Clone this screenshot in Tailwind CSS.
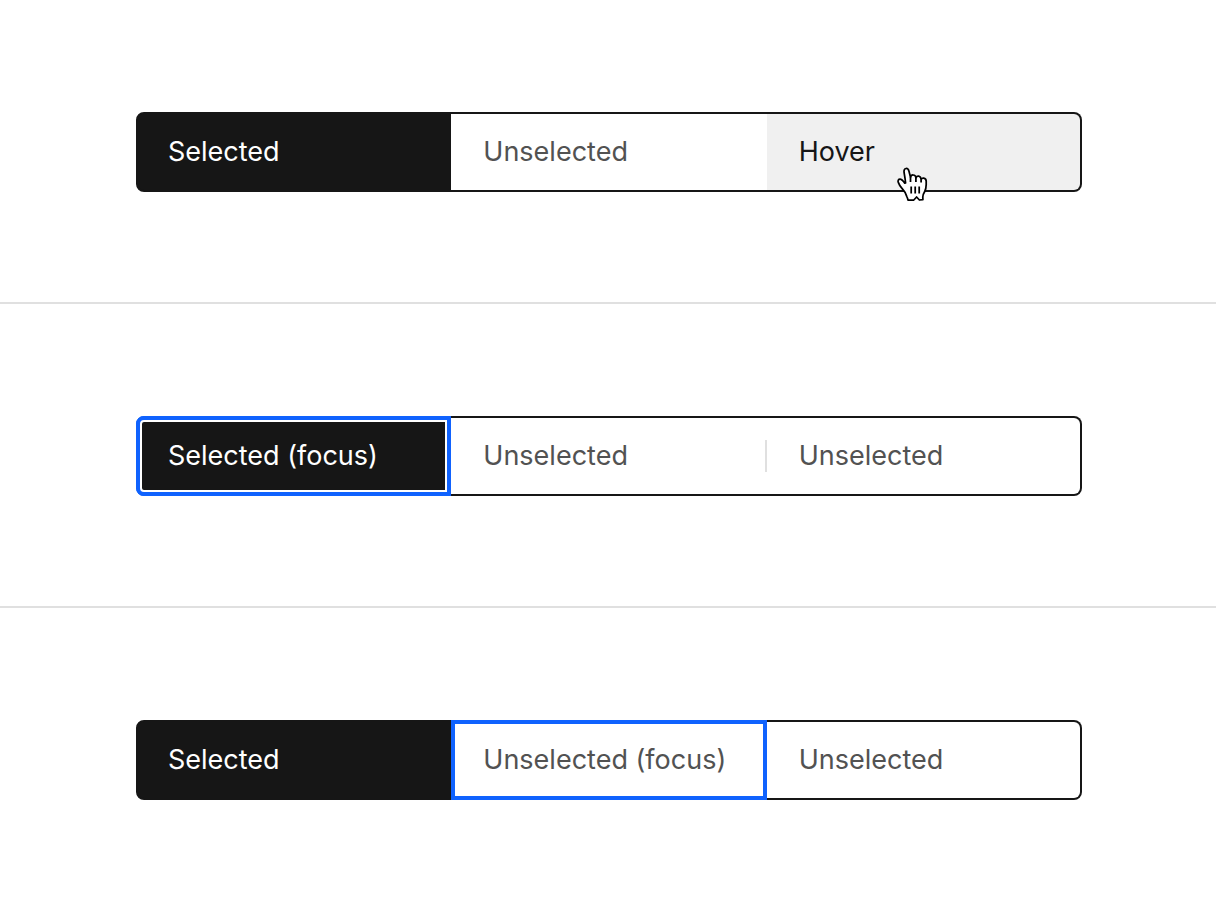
<!DOCTYPE html>
<html lang="en">
<head>
<meta charset="utf-8">
<meta name="viewport" content="width=device-width, initial-scale=1">
<title>Content switcher states</title>
<script src="https://cdn.jsdelivr.net/npm/@tailwindcss/browser@4"></script>
</head>
<body class="bg-white font-['Inter',sans-serif] text-[27px] leading-9 font-normal">
<main>
  <section class="border-b-2 border-[#e0e0e0] pt-28 pr-[134px] pb-[110px] pl-[136px]">
    <div role="tablist" aria-label="Hover state" class="grid grid-cols-3">
      <button role="tab" aria-selected="true" class="h-20 rounded-l-lg border-2 border-[#161616] bg-[#161616] px-[30px] text-left text-white">Selected</button>
      <button role="tab" aria-selected="false" class="h-20 border-y-2 border-[#161616] bg-white px-8 text-left text-[#525252]">Unselected</button>
      <button role="tab" aria-selected="false" class="relative h-20 rounded-r-lg border-y-2 border-r-2 border-[#161616] bg-[#f0f0f0] px-8 text-left text-[#161616]">Hover
        <svg class="absolute top-[51px] left-[129px] h-[38px] w-8" viewBox="0 0 32 38" fill="none" aria-hidden="true">
          <path d="M10.8 31.5C10.2 28.5 8.4 26 6.2 23.6C4.2 21.6 3 19.4 2.3 17.4C1.6 15.6 2.4 14.2 4 14.2C5.8 14.2 7.2 16 8.8 18.2L9.6 18C9.3 14.5 8.7 11 8.1 7.6C7.7 5.4 8.4 3.7 10 3.5C11.7 3.3 12.6 4.7 13 6.4L14.5 12.2C14.8 10.8 15.7 9.9 17.2 10C18.8 10.1 19.8 11.2 19.9 12.8C20.5 11.5 21.5 10.9 22.8 11.2C24.2 11.5 24.9 12.6 25.1 14.2C25.7 13.3 26.6 12.9 27.7 13.1C29.3 13.4 30.2 14.5 30.2 16.3V19.5C30.2 22.6 29.7 24.6 28.6 26.8C27.4 28.7 26.8 30 26.8 32L26.9 34.6L23.4 35L20.6 32L17.8 35H12L11.6 33.5Z" fill="white" stroke="black" stroke-width="1.75" stroke-linejoin="round"/>
          <path d="M14.5 12.2V17M19.9 12.8V17M25.1 14.2V17.5M15.2 21.5V28.5M19.2 21.5V28.5M23.2 21.5V28.5" stroke="black" stroke-width="1.75"/>
        </svg>
      </button>
    </div>
  </section>

  <section class="border-b-2 border-[#e0e0e0] pt-28 pr-[134px] pb-[110px] pl-[136px]">
    <div role="tablist" aria-label="Selected focus state" class="grid grid-cols-3">
      <button role="tab" aria-selected="true" class="h-20 rounded-l-lg border-2 border-[#0f62fe] bg-[#161616] px-[30px] text-left text-white shadow-[inset_0_0_0_4px_white] outline-4 -outline-offset-4 outline-[#0f62fe]">Selected (focus)</button>
      <button role="tab" aria-selected="false" class="flex h-20 items-center justify-between border-y-2 border-[#161616] bg-white pl-8 text-left text-[#525252]">Unselected<span class="h-8 w-0.5 bg-[#e0e0e0]"></span></button>
      <button role="tab" aria-selected="false" class="h-20 rounded-r-lg border-y-2 border-r-2 border-[#161616] bg-white px-8 text-left text-[#525252]">Unselected</button>
    </div>
  </section>

  <section class="pt-28 pr-[134px] pb-[110px] pl-[136px]">
    <div role="tablist" aria-label="Unselected focus state" class="grid grid-cols-3">
      <button role="tab" aria-selected="true" class="h-20 rounded-l-lg border-2 border-[#161616] bg-[#161616] px-[30px] text-left text-white">Selected</button>
      <button role="tab" aria-selected="false" class="h-20 border-y-2 border-[#161616] bg-white px-8 text-left text-[#525252] outline-4 -outline-offset-4 outline-[#0f62fe]">Unselected (focus)</button>
      <button role="tab" aria-selected="false" class="h-20 rounded-r-lg border-y-2 border-r-2 border-[#161616] bg-white px-8 text-left text-[#525252]">Unselected</button>
    </div>
  </section>
</main>
</body>
</html>
